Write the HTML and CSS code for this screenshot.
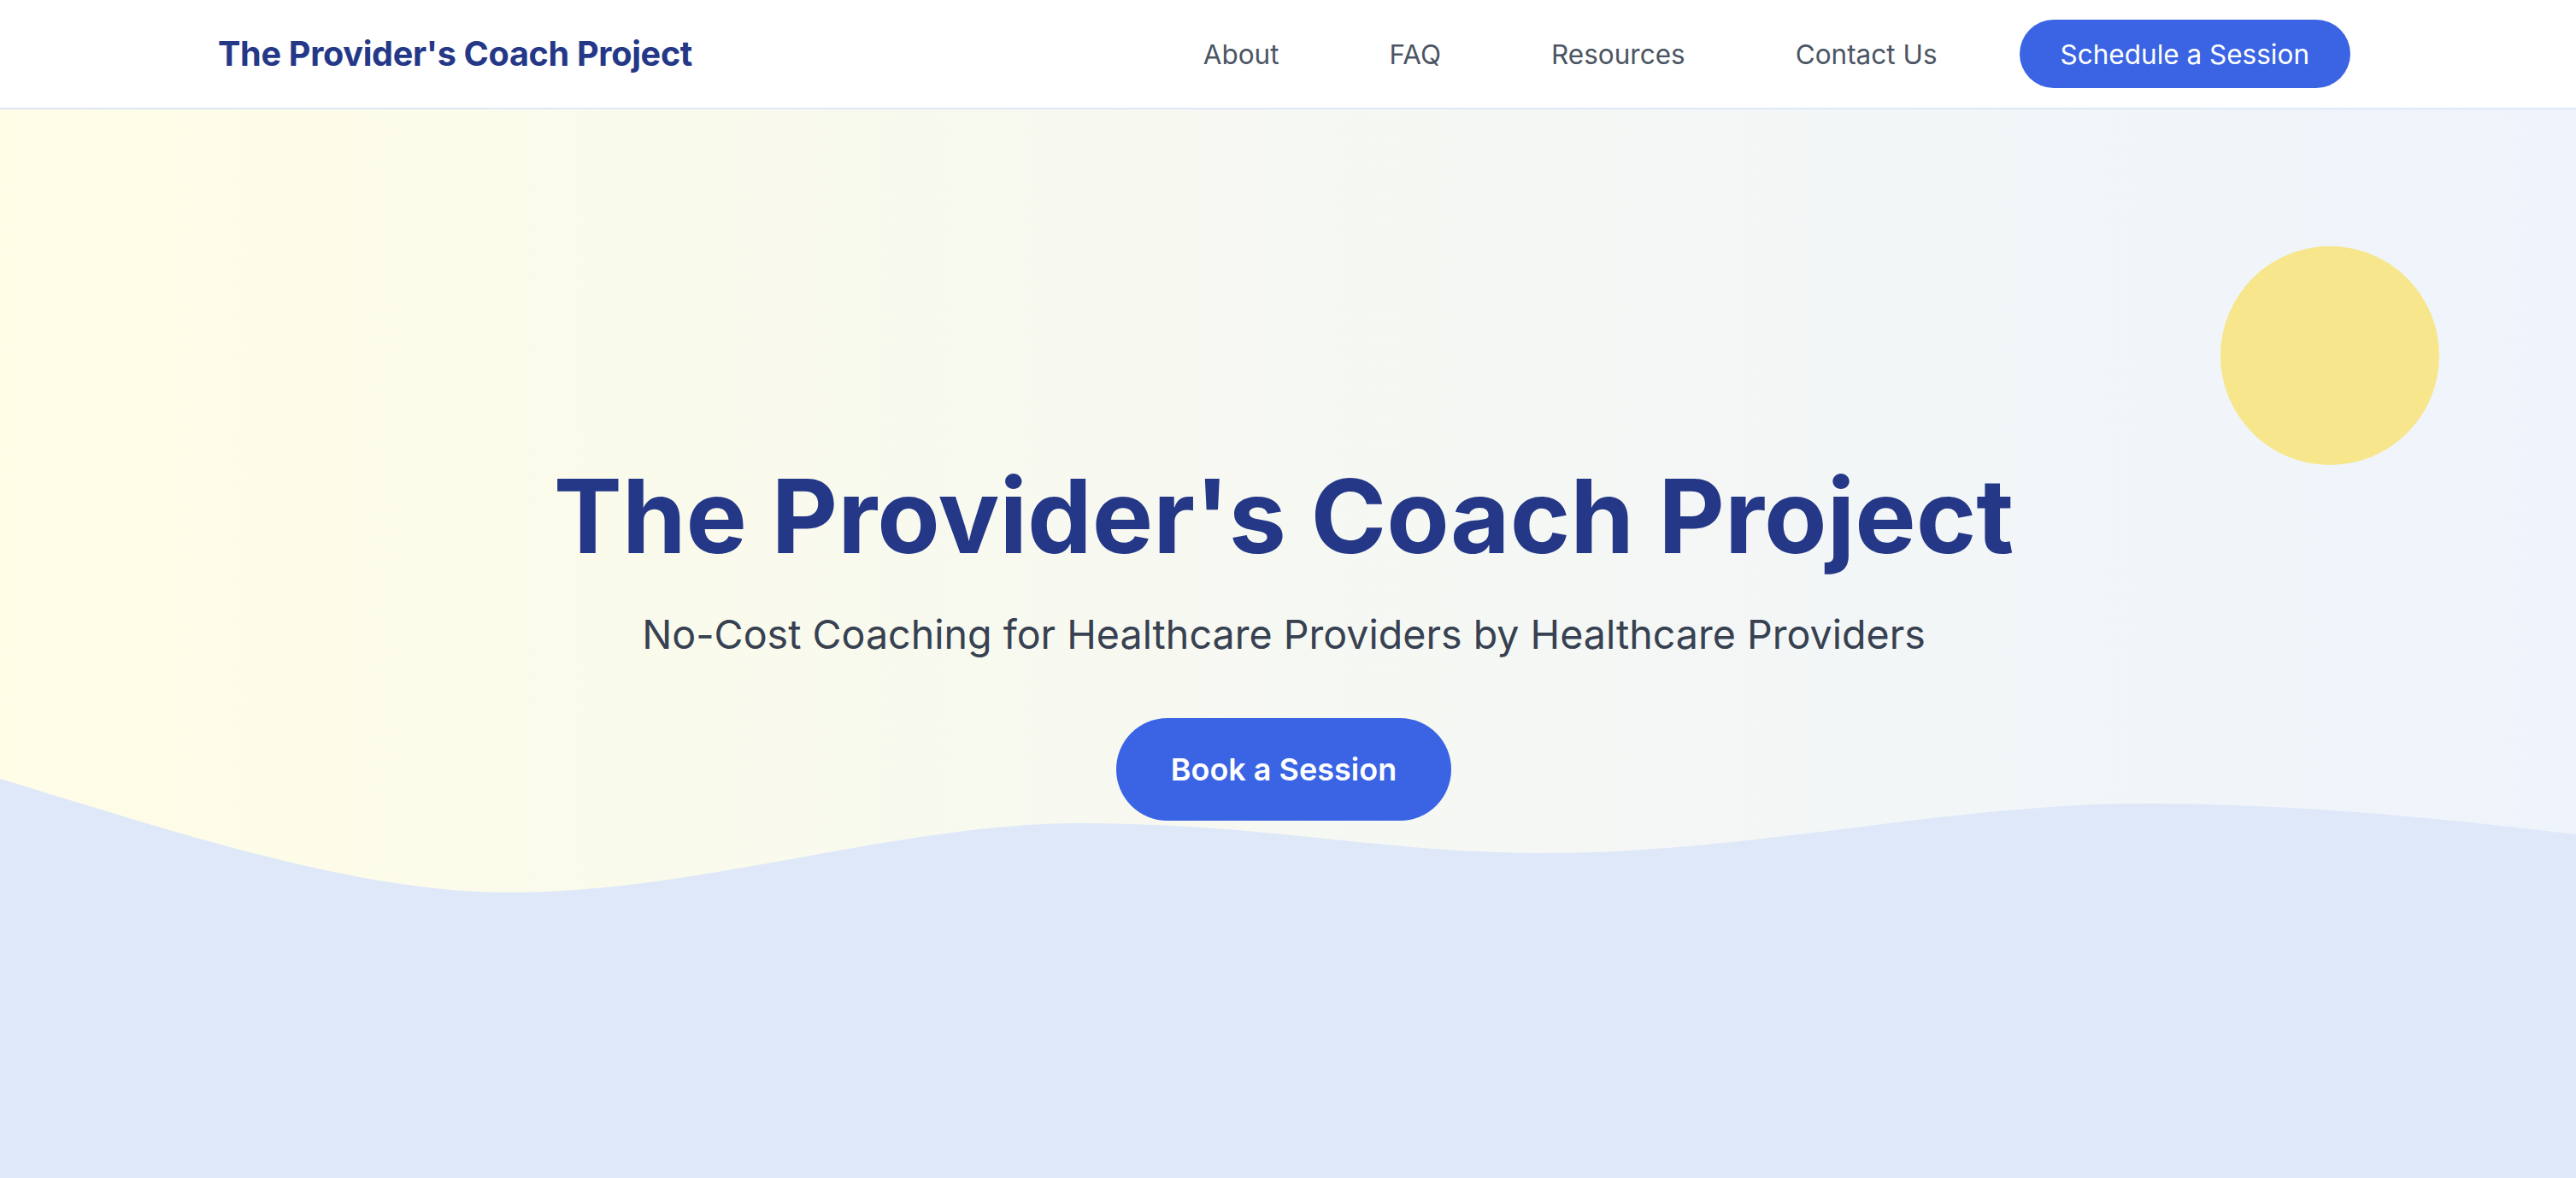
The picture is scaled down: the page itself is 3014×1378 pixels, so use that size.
FILE: index.html
```html
<!DOCTYPE html>
<html lang="en">
<head>
<meta charset="utf-8">
<title>The Provider's Coach Project</title>
<link rel="stylesheet" href="styles.css">
</head>
<body>
<header class="nav">
  <a class="brand" href="#">The Provider's Coach Project</a>
  <nav class="links">
    <a href="#">About</a>
    <a href="#">FAQ</a>
    <a href="#">Resources</a>
    <a href="#">Contact Us</a>
  </nav>
  <a class="nav-btn" href="#">Schedule a Session</a>
</header>
<section class="hero">
  <div class="sun"></div>
  <svg class="wave" viewBox="0 0 3014 470" preserveAspectRatio="none" aria-hidden="true">
    <path d="M0,3 C220,70 420,136 596,136 C820,136 1050,55 1263,55 C1480,55 1620,90 1807,90 C2050,90 2280,32 2510,32 C2700,32 2880,52 3014,68 L3014,470 L0,470 Z" fill="#dee8f9"/>
  </svg>
  <div class="hero-content">
    <h1 class="title">The Provider's Coach Project</h1>
    <p class="subtitle">No-Cost Coaching for Healthcare Providers by Healthcare Providers</p>
    <a class="cta" href="#">Book a Session</a>
  </div>
</section>
</body>
</html>
```

FILE: styles.css
```css
* { box-sizing: border-box; }
html, body { margin: 0; padding: 0; }
body {
  font-family: Inter, "Noto Sans", "Liberation Sans", sans-serif;
  background: #dee8f9;
  overflow: hidden;
}
a { text-decoration: none; }

.nav {
  display: flex;
  align-items: center;
  height: 128px;
  padding: 0 264px 0 255px;
  background: #ffffff;
  border-bottom: 2px solid #dde8f8;
}
.brand {
  font-size: 39.6px;
  font-weight: 700;
  color: #253887;
  letter-spacing: -0.3px;
}
.links {
  margin-left: auto;
  display: flex;
  gap: 129px;
}
.links a {
  font-size: 31.5px;
  color: #4b5563;
}
.nav-btn {
  margin-left: 96px;
  display: flex;
  align-items: center;
  height: 80px;
  padding: 0 48px;
  border-radius: 40px;
  background: #3a64e3;
  color: #ffffff;
  font-size: 31.5px;
}

.hero {
  position: relative;
  height: calc(100vh - 128px);
  display: flex;
  align-items: center;
  justify-content: center;
  overflow: hidden;
  background: linear-gradient(to right, #fffde6, #f6f8f2 50%, #eff4fc);
}
.sun {
  position: absolute;
  top: 160px;
  right: 160px;
  width: 256px;
  height: 256px;
  border-radius: 50%;
  background: #f7e68b;
}
.wave {
  position: absolute;
  left: 0;
  bottom: 0;
  width: 100%;
  height: 470px;
  display: block;
}
.hero-content {
  position: relative;
  z-index: 1;
  display: flex;
  flex-direction: column;
  align-items: center;
  text-align: center;
  margin-top: -8px;
  margin-right: 10px;
}
.title {
  margin: 0;
  font-size: 120px;
  line-height: 1.1;
  font-weight: 700;
  color: #253887;
}
.subtitle {
  margin: 40px 0 0;
  font-size: 46.6px;
  line-height: 1.4;
  color: #374151;
}
.cta {
  margin-top: 65px;
  display: flex;
  align-items: center;
  height: 120px;
  padding: 0 64px;
  border-radius: 60px;
  background: #3a64e3;
  color: #ffffff;
  font-size: 36px;
  font-weight: 600;
}
```
